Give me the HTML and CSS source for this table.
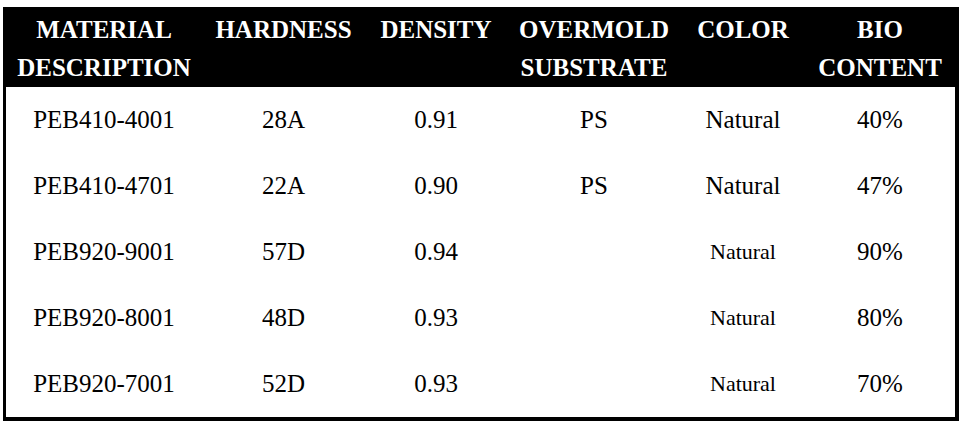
FILE: index.html
```html
<!DOCTYPE html>
<html>
<head>
<meta charset="utf-8">
<link rel="stylesheet" href="styles.css">
</head>
<body>
<table class="spec">
  <colgroup>
    <col class="c1"><col class="c2"><col class="c3"><col class="c4"><col class="c5"><col class="c6">
  </colgroup>
  <thead>
    <tr>
      <th>MATERIAL<br>DESCRIPTION</th>
      <th>HARDNESS</th>
      <th>DENSITY</th>
      <th>OVERMOLD<br>SUBSTRATE</th>
      <th>COLOR</th>
      <th>BIO<br>CONTENT</th>
    </tr>
  </thead>
  <tbody>
    <tr><td>PEB410-4001</td><td>28A</td><td>0.91</td><td>PS</td><td>Natural</td><td>40%</td></tr>
    <tr><td>PEB410-4701</td><td>22A</td><td>0.90</td><td>PS</td><td>Natural</td><td>47%</td></tr>
    <tr><td>PEB920-9001</td><td>57D</td><td>0.94</td><td></td><td class="small">Natural</td><td>90%</td></tr>
    <tr><td>PEB920-8001</td><td>48D</td><td>0.93</td><td></td><td class="small">Natural</td><td>80%</td></tr>
    <tr><td>PEB920-7001</td><td>52D</td><td>0.93</td><td></td><td class="small">Natural</td><td>70%</td></tr>
  </tbody>
</table>
</body>
</html>
```

FILE: styles.css
```css
html, body {
  margin: 0;
  background: #fff;
}
body {
  padding: 7px 0 0 3px;
  font-family: "Liberation Serif", "Times New Roman", serif;
  color: #000;
}
.spec {
  width: 956px;
  border: 3px solid #000;
  border-right-width: 4px;
  border-bottom-width: 4px;
  border-collapse: separate;
  border-spacing: 0;
  table-layout: fixed;
}
.c1 { width: 196px; }
.c2 { width: 163px; }
.c3 { width: 142px; }
.c4 { width: 174px; }
.c5 { width: 124px; }
.c6 { width: 150px; }
.spec th {
  background: #000;
  color: #fff;
  font-weight: bold;
  font-size: 25px;
  line-height: 38px;
  height: 77px;
  padding: 1px 0 0;
  box-sizing: border-box;
  vertical-align: top;
  text-align: center;
  white-space: nowrap;
}
.spec td {
  height: 66px;
  padding: 0;
  font-size: 25px;
  text-align: center;
  vertical-align: middle;
  white-space: nowrap;
}
.spec td.small {
  font-size: 22px;
}
```
